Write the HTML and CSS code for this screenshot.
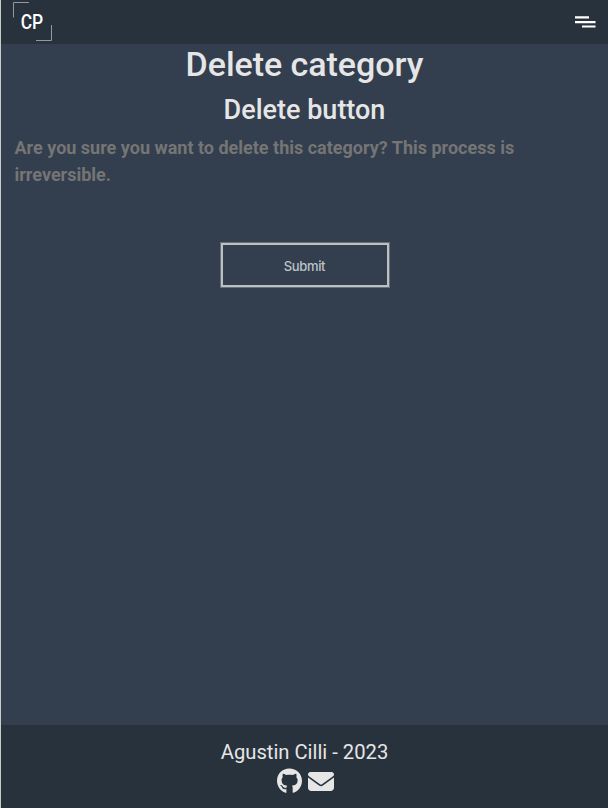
FILE: index.html
```html
<!DOCTYPE html>
<html lang="en">
<head>
<meta charset="utf-8">
<title>Delete category</title>
<link rel="stylesheet" href="styles.css">
</head>
<body>
<header class="navbar">
  <a class="logo" href="#">
    <svg class="logo-frame" viewBox="0 0 40 40" aria-hidden="true"><path d="M.5 15.500V.5H16M38.500 23v15.500H23"/></svg>
    <span class="logo-text">CP</span>
  </a>
  <svg class="menu" viewBox="0 0 22 14" aria-label="Menu"><path d="M1 2.400H15M1 7.100H21.500M8 11.500H21.500"/></svg>
</header>
<main class="content">
  <h1>Delete category</h1>
  <h2>Delete button</h2>
  <p class="warning">Are you sure you want to delete this category? This process is irreversible.</p>
  <button class="submit" type="button">Submit</button>
</main>
<footer class="footer">
  <p class="author">Agustin Cilli - 2023</p>
  <div class="links">
    <svg class="github" viewBox="0 0 496 512" aria-label="GitHub"><path d="M165.900 397.400c0 2-2.300 3.600-5.200 3.600-3.300.3-5.600-1.300-5.600-3.600 0-2 2.300-3.600 5.200-3.600 3-.3 5.600 1.300 5.600 3.600zm-31.100-4.500c-.7 2 1.300 4.300 4.300 4.900 2.600 1 5.600 0 6.200-2s-1.300-4.300-4.300-5.200c-2.600-.7-5.500.3-6.200 2.300zm44.200-1.700c-2.900.7-4.900 2.600-4.600 4.900.3 2 2.900 3.300 5.900 2.600 2.900-.7 4.900-2.600 4.600-4.600-.3-1.900-3-3.200-5.900-2.900zM244.800 8C106.100 8 0 113.300 0 252c0 110.900 69.800 205.800 169.500 239.200 12.800 2.300 17.300-5.600 17.300-12.100 0-6.200-.3-40.400-.3-61.400 0 0-70 15-84.700-29.800 0 0-11.400-29.100-27.800-36.600 0 0-22.900-15.700 1.600-15.400 0 0 24.900 2 38.600 25.800 21.900 38.600 58.600 27.500 72.900 20.900 2.300-16 8.800-27.100 16-33.700-55.900-6.200-112.300-14.300-112.300-110.500 0-27.500 7.600-41.300 23.600-58.900-2.600-6.500-11.100-33.300 2.600-67.900 20.900-6.500 69 27 69 27 20-5.600 41.500-8.500 62.800-8.500s42.800 2.900 62.800 8.500c0 0 48.100-33.600 69-27 13.700 34.700 5.200 61.400 2.600 67.900 16 17.700 25.800 31.500 25.800 58.900 0 96.500-58.900 104.200-114.800 110.500 9.200 7.900 17 22.900 17 46.400 0 33.700-.3 75.400-.3 83.600 0 6.500 4.600 14.400 17.300 12.100C428.200 457.800 496 362.900 496 252 496 113.300 383.500 8 244.800 8z"/></svg>
    <svg class="mail" viewBox="0 0 512 384" preserveAspectRatio="none" aria-label="Email"><path d="M48 0C21.500 0 0 21.500 0 48c0 15.100 7.100 29.300 19.200 38.400l217.600 163.200c11.400 8.500 27 8.500 38.400 0L492.800 86.400C504.900 77.300 512 63.100 512 48c0-26.500-21.500-48-48-48H48zM0 112v208c0 35.300 28.700 64 64 64h384c35.300 0 64-28.700 64-64V112L294.400 275.200c-22.800 17.100-54 17.100-76.800 0L0 112z"/></svg>
  </div>
</footer>
</body>
</html>
```
FILE: styles.css
```css
* {
  box-sizing: border-box;
}

body {
  margin: 0;
  height: 100vh;
  display: flex;
  flex-direction: column;
  overflow: hidden;
  border-left: 1px solid #c9cbcb;
  background: #333e4e;
  color: #e6e6e6;
  font-family: Roboto, "Liberation Sans", sans-serif;
}

h1, h2, p {
  margin: 0;
}

.navbar {
  height: 44px;
  flex: none;
  display: flex;
  justify-content: space-between;
  align-items: center;
  padding: 0 12px;
  background: #28323d;
}

.logo {
  width: 40px;
  height: 40px;
  display: grid;
  color: #fff;
  text-decoration: none;
}

.logo-frame,
.logo-text {
  grid-area: 1 / 1;
}

.logo-frame {
  width: 40px;
  height: 40px;
  fill: none;
  stroke: #9299a0;
}

.logo-text {
  place-self: center;
  margin-right: 2px;
  font-size: 20px;
  font-weight: 500;
  line-height: 20px;
  transform: scaleX(.87);
}

.menu {
  width: 22px;
  height: 14px;
  fill: none;
  stroke: #fff;
  stroke-width: 2.2;
}

.content {
  flex: 1;
  display: flex;
  flex-direction: column;
  align-items: center;
  padding: 0 14px;
}

h1 {
  font-size: 34px;
  font-weight: 500;
  line-height: 41px;
  letter-spacing: -.04px;
}

h2 {
  margin-top: 9px;
  font-size: 27px;
  font-weight: 500;
  line-height: 33px;
}

.warning {
  align-self: stretch;
  margin: 7px 0 0 -.5px;
  color: #757575;
  font-size: 18px;
  font-weight: 700;
  line-height: 27px;
}

.submit {
  width: 168px;
  height: 44px;
  margin-top: 55px;
  padding: 1px 0 0;
  border: 2px solid #bbc0c1;
  box-shadow: 0 0 0 1px #66707b;
  background: transparent;
  color: #bbc5c9;
  font: 500 13px Inter, "Liberation Sans", sans-serif;
  letter-spacing: -.35px;
}

.footer {
  height: 83px;
  flex: none;
  padding-top: 12px;
  background: #28323d;
  text-align: center;
}

.author {
  font-size: 20.200px;
  line-height: 30px;
}

.links {
  display: flex;
  justify-content: center;
  align-items: center;
  gap: 6px;
  height: 27px;
  padding-top: 1px;
  padding-left: 1px;
  fill: #e6e6e6;
}

.github {
  width: 25px;
  height: 26px;
}

.mail {
  width: 26px;
  height: 19px;
}
```
